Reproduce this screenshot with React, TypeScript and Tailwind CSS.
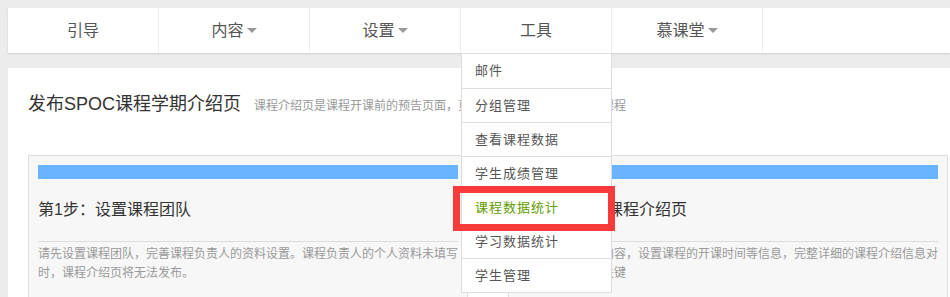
import React from "react";

const font = { fontFamily: '"Liberation Sans", "Noto Sans CJK SC", sans-serif' };

function Caret() {
  return (
    <span className="ml-[3px] inline-block w-0 h-0 border-l-[5px] border-r-[5px] border-t-[5px] border-l-transparent border-r-transparent border-t-[#999]" />
  );
}

const navItems: { label: string; caret: boolean }[] = [
  { label: "引导", caret: false },
  { label: "内容", caret: true },
  { label: "设置", caret: true },
  { label: "工具", caret: false },
  { label: "慕课堂", caret: true },
];

const menu = ["邮件", "分组管理", "查看课程数据", "学生成绩管理", "课程数据统计", "学习数据统计", "学生管理"];

export default function App() {
  return (
    <div className="h-[297px] overflow-hidden bg-[#ececec] pt-2 pl-2 text-[#555]" style={font}>
      <nav className="relative z-20 flex h-[45px] bg-white shadow-[0_1px_2px_rgba(0,0,0,0.12)]">
        {navItems.map((it, i) => (
          <div
            key={it.label}
            className="relative flex w-[151px] items-center justify-center border-r border-[#eee] text-[16px] text-[#555]"
          >
            <span>{it.label}</span>
            {it.caret && <Caret />}
            {i === 3 && (
              <div className="absolute left-0 top-[45px] w-[151px] border border-[#ddd] bg-white">
                {menu.map((m, j) => (
                  <div
                    key={m}
                    className={`flex h-[34px] items-center pl-[13px] text-[13px] tracking-[1px] ${
                      j > 0 ? "border-t border-[#ddd]" : ""
                    } ${j === 4 ? "text-[#5f9c00]" : "text-[#555]"}`}
                  >
                    {m}
                  </div>
                ))}
                <div className="absolute left-[-9px] top-[132px] h-[45px] w-[162px] border-[7px] border-[#f93a3a]" />
              </div>
            )}
          </div>
        ))}
      </nav>

      <div className="mt-[15px] bg-white pl-[20px]">
        <div className="flex items-end pt-[24px]">
          <h1 className="text-[18px] leading-[24px] text-[#333]">发布SPOC课程学期介绍页</h1>
          <span className="ml-[13px] pb-[1px] text-[12px] leading-[18px] text-[#999]">
            课程介绍页是课程开课前的预告页面，页面发布后学生可以报名该课程
          </span>
        </div>

        <div className="mt-[39px] grid grid-cols-[440px_440px] gap-x-[40px]">
          {[
            {
              title: "第1步：设置课程团队",
              desc: "请先设置课程团队，完善课程负责人的资料设置。课程负责人的个人资料未填写时，课程介绍页将无法发布。",
            },
            {
              title: "第2步：编辑课程介绍页",
              desc: "请编辑课程介绍内容，设置课程的开课时间等信息，完整详细的课程介绍信息对吸引学生选课很关键",
            },
          ].map((p) => (
            <div key={p.title} className="h-[150px] border border-[#ddd] bg-[#f7f7f7] px-[9px] pt-[9px]">
              <div className="h-[14px] bg-[#6ab4ff]" />
              <div className="mt-[19px] text-[16px] leading-[24px] text-[#333]">{p.title}</div>
              <div className="mt-[19px] border-t border-[#ddd]" />
              <p className="mt-[3px] text-[12px] leading-[19px] text-[#999]">{p.desc}</p>
            </div>
          ))}
        </div>
      </div>
    </div>
  );
}
